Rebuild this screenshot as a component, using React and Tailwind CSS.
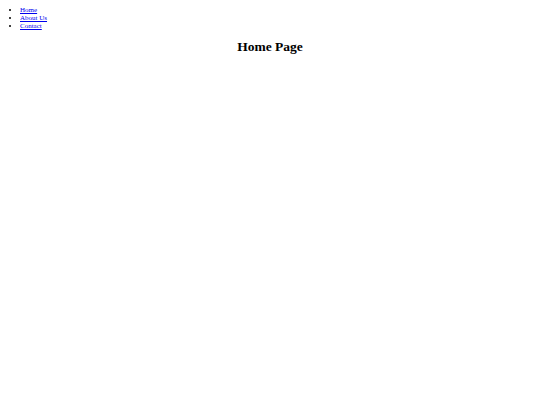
const links = ["Home", "About Us", "Contact"]

const App = () => {
  return (
    <div className="min-h-[405px] bg-white text-black font-['Liberation_Serif','Times_New_Roman',serif] flow-root">
      <nav>
        <ul className="list-disc pl-[20px] mt-[7px] mb-0 text-[7px] leading-[7.75px]">
          {links.map((l) => (
            <li key={l}>
              <a href="#" className="text-[#0000ee] underline">{l}</a>
            </li>
          ))}
        </ul>
      </nav>
      <h1 className="text-[13.5px] leading-[15.5px] font-bold text-center mt-[8.5px]">Home Page</h1>
    </div>
  )
}

export default App
